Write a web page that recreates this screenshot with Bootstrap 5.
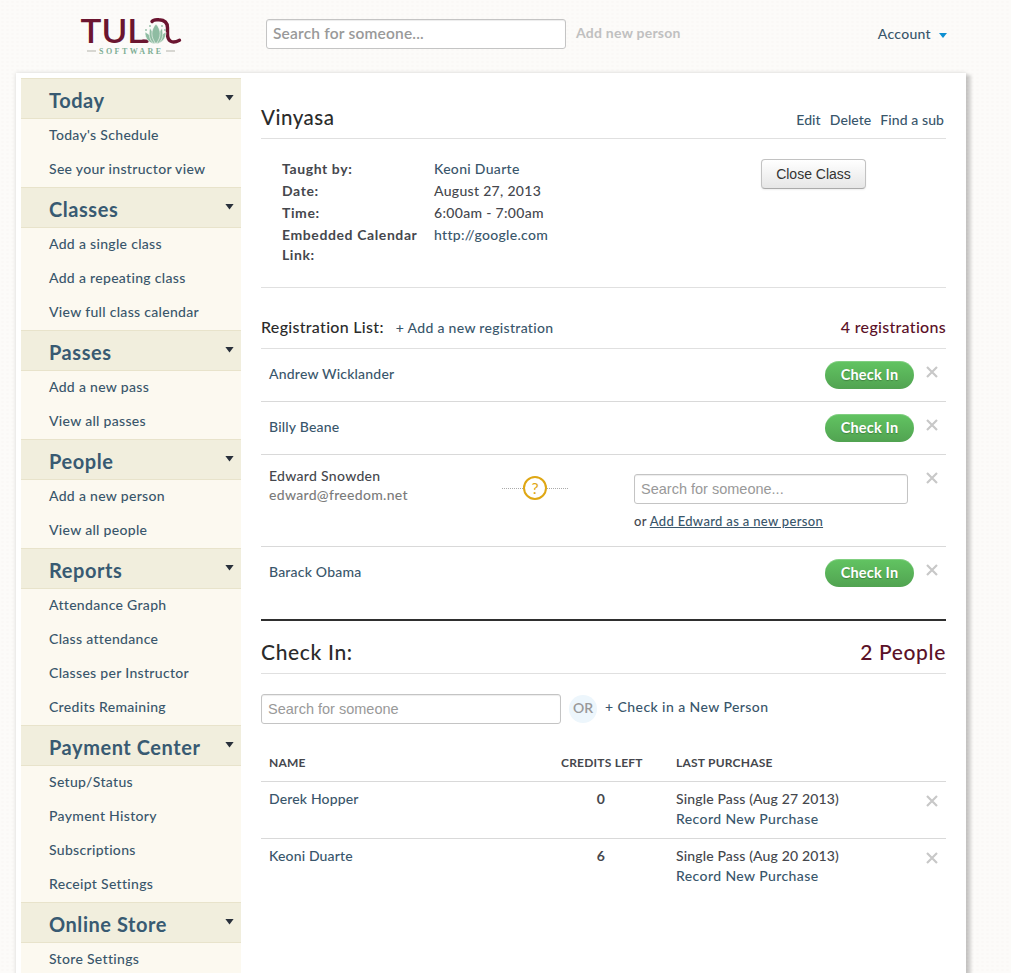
<!DOCTYPE html>
<html lang="en">
<head>
  <meta charset="UTF-8" />
  <meta name="viewport" content="width=device-width, initial-scale=1.0"/>
  <title>Tula Software - Vinyasa</title>
  <link href="https://cdn.jsdelivr.net/npm/bootstrap@5.3.2/dist/css/bootstrap.min.css" rel="stylesheet" />

  <style>
    body {
      font-family: Lato, sans-serif;
      font-size: 14px;
      font-weight: 500;
      line-height: 20px;
      letter-spacing: .31px;
      color: #45474d;
      height: 973px;
      overflow: hidden;
      background-color: #fcfbf9;
      background-image: radial-gradient(#faf8f6 1px, transparent 1.5px);
      background-size: 5px 4px;
    }
    a {
      color: #39566b;
      text-decoration: none;
    }

    /* top bar */
    .top-bar {
      height: 73px;
      padding: 0 64px 5px 79px;
    }
    .brand-logo {
      width: 104px;
      height: 48px;
      margin-right: 83px;
      overflow: visible;
    }
    .search-box {
      height: 30px;
      padding: 0 6px;
      border: 1px solid #c4c4c4;
      border-radius: 3px;
      box-shadow: inset 0 1px 1px rgba(0, 0, 0, .075);
      font-family: "Liberation Sans", sans-serif;
      font-size: 14.5px;
      letter-spacing: 0;
    }
    .search-box::placeholder {
      color: #999;
      opacity: 1;
    }
    .search-top {
      width: 300px;
      font-family: Lato, sans-serif;
      font-size: 15.5px;
      font-weight: 600;
      letter-spacing: .2px;
      padding-bottom: 2px;
    }
    .add-person {
      color: #c0c0c0;
      font-weight: 700;
      letter-spacing: .25px;
      margin-left: 10px;
      margin-top: -2px;
    }
    .account-caret {
      width: 8px;
      height: 5px;
      margin-top: 3px;
      background: #0d8fd1;
      clip-path: polygon(0 0, 100% 0, 50% 100%);
    }

    /* white sheet */
    .sheet {
      width: 950px;
      height: 905px;
      margin-left: 16px;
      padding: 5px 20px 0 5px;
      background: #fff;
      box-shadow: 5px 2px 3px rgba(0, 0, 0, .17), 0 0 4px rgba(0, 0, 0, .15);
    }

    /* sidebar */
    .side-menu {
      width: 220px;
      background: #fcf9f0;
    }
    .side-head {
      height: 41px;
      padding: 3px 7px 0 28px;
      border-top: 1px solid #e8e3cb;
      border-bottom: 1px solid #e8e3cb;
      background: #f1eedd;
      color: #385a72;
      font-size: 20px;
      font-weight: 700;
      letter-spacing: .55px;
    }
    .side-head::after {
      content: "";
      width: 9px;
      height: 6px;
      margin-bottom: 5px;
      background: #29303b;
      clip-path: polygon(0 0, 100% 0, 50% 100%);
    }
    .side-link {
      display: block;
      height: 34px;
      padding: 6px 0 0 28px;
    }

    /* class page */
    .page-title {
      height: 61px;
      padding: 27px 2px 0 0;
      border-bottom: 1px solid #e0e0e0;
    }
    .page-title h1 {
      font-size: 20.5px;
      font-weight: 500;
      line-height: 24px;
      color: #2b2b2b;
      letter-spacing: .5px;
    }
    .title-links {
      gap: 9px;
      padding-top: 5px;
      letter-spacing: .08px;
    }
    .class-info {
      height: 149px;
      padding: 20px 80px 0 21px;
      border-bottom: 1px solid #e0e0e0;
    }
    .class-info dl {
      grid-template-columns: 152px auto;
      row-gap: 2px;
    }
    .class-info dt {
      font-weight: 700;
      letter-spacing: .6px;
      padding-right: 12px;
    }
    .btn-close-class {
      width: 105px;
      height: 30px;
      padding: 0;
      border: 1px solid #c2c2c2;
      border-bottom-color: #aaa;
      border-radius: 4px;
      background: linear-gradient(#fff, #e6e6e6);
      box-shadow: 0 1px 2px rgba(0, 0, 0, .07);
      font-family: "Liberation Sans", sans-serif;
      font-size: 14px;
      letter-spacing: 0;
      color: #333;
    }
    .reg-head {
      height: 61px;
      padding-top: 29px;
      border-bottom: 1px solid #e0e0e0;
    }
    .reg-head h2 {
      font-size: 16px;
      font-weight: 500;
      line-height: 20px;
      letter-spacing: .3px;
      color: #2b2b2b;
    }
    .reg-head a {
      margin-left: 12px;
      padding-top: 1px;
    }
    .reg-head .wine,
    .checkin-head .wine {
      color: #5b1128;
    }
    .reg-row {
      height: 53px;
      padding: 12px 8px 0;
      border-bottom: 1px solid #d9d9d9;
    }
    .reg-row > a {
      padding-top: 3px;
      letter-spacing: .2px;
    }
    .reg-row-last {
      height: 72px;
      border-bottom: 0;
    }
    .reg-unknown {
      height: 92px;
    }
    .unknown-person {
      width: 233px;
      margin-top: -1px;
      line-height: 19px;
    }
    .btn-checkin {
      width: 89px;
      height: 28px;
      margin-right: 12px;
      padding: 0 0 1px;
      border: 0;
      border-radius: 14px;
      background: linear-gradient(#62c462, #51a351);
      box-shadow: inset 0 1px 0 rgba(255, 255, 255, .2);
      color: #fff;
      font-size: 14.5px;
      font-weight: 700;
      line-height: 27px;
      letter-spacing: .2px;
      text-shadow: 0 1px 1px rgba(0, 0, 0, .25);
    }
    .x-icon {
      display: block;
      width: 12px;
      height: 12px;
      margin-top: 5px;
      stroke: #c8c8c8;
      stroke-width: 2.2;
    }
    .muted-mail {
      color: #7b7b7b;
    }
    .dotted-line {
      width: 21px;
      border-top: 1px dotted #aaa;
    }
    .unknown-match {
      width: 66px;
      margin-top: 9px;
    }
    .person-match {
      width: 274px;
      margin-right: 18px;
      padding-top: 7px;
    }
    .small-note {
      font-size: 13px;
      letter-spacing: .33px;
      margin-top: 7px;
    }

    /* check in */
    .checkin-head {
      height: 55px;
      padding-top: 19px;
      border-top: 2px solid #2f2f2f;
      border-bottom: 1px solid #e0e0e0;
    }
    .checkin-head h2 {
      font-size: 21px;
      font-weight: 500;
      line-height: 24px;
      letter-spacing: .65px;
      color: #2b2b2b;
    }
    .checkin-tools {
      padding-top: 20px;
    }
    .checkin-tools a {
      padding-bottom: 4px;
      letter-spacing: .43px;
    }
    .or-dot {
      width: 28px;
      height: 28px;
      margin: 0 8px;
      background: #edf6fc;
      color: #999;
      font-weight: 600;
      line-height: 26px;
      letter-spacing: 0;
    }
    .people-table {
      --bs-table-bg: transparent;
      --bs-table-color: #45474d;
      table-layout: fixed;
      color: #45474d;
    }
    .people-table th {
      height: 57px;
      padding: 29px 8px 0;
      font-size: 12px;
      font-weight: 700;
      line-height: 19px;
      letter-spacing: .22px;
      vertical-align: top;
      border-bottom: 1px solid #d9d9d9;
    }
    .people-table td {
      height: 57px;
      padding: 7px 8px 0;
      letter-spacing: .15px;
      border-bottom: 1px solid #d9d9d9;
    }
    .people-table td:nth-child(3) a {
      letter-spacing: .4px;
    }
    .people-table td .x-icon {
      margin-top: 6px;
    }
    .people-table td.credit-count {
      padding-right: 27px;
      font-weight: 700;
      text-align: center;
    }
    .people-table tr:last-child td {
      border-bottom: 0;
    }
  </style>
</head>
<body>

<header class="top-bar d-flex align-items-center">
  <svg class="brand-logo" viewBox="0 0 104 48">
    <text x="1.5" y="33" font-family="Lato" font-size="33" font-weight="600" letter-spacing="0" textLength="65" lengthAdjust="spacingAndGlyphs" fill="#6b1530">TUL</text>
    <g fill="none" stroke="#6b1530" stroke-width="3.4" stroke-linecap="round">
      <path d="M73 11.500c1-1.500 4-2 7-1.700c6 .3 8.500 3.200 8.500 8v6c0 7 4 10.500 12 6.500"/>
      <path d="M64 31.300h4"/>
    </g>
    <g fill="#8fbca2" stroke="#fcfbf9" stroke-width=".6">
      <path d="M66 22c0 7 4 11 10 12c-1-5-4-9-10-12zM87 22c0 7-4 11-10 12c1-5 4-9 10-12z"/>
      <path d="M71 18c-2 7 0 14 5 16c0-6-1-11-5-16zM83 18c2 7 0 14-5 16c0-6 1-11 5-16z"/>
      <path d="M77 14c-5.500 6-5.500 13 0 20c5.500-7 5.500-14 0-20z"/>
    </g>
    <g fill="#8fbca2">
      <circle cx="71" cy="16" r=".9"/><circle cx="83" cy="16" r=".9"/>
      <circle cx="67" cy="20" r=".9"/><circle cx="86" cy="20" r=".9"/>
    </g>
    <path d="M8 41h9M87 41h9" stroke="#b3b3ab" stroke-width="1"/>
    <text x="20" y="44" font-family="Liberation Serif" font-size="8" font-weight="700" textLength="64" letter-spacing="2" fill="#7fae95">SOFTWARE</text>
  </svg>
  <input class="search-box search-top" type="text" placeholder="Search for someone...">
  <a class="add-person" href="#">Add new person</a>
  <a class="d-flex align-items-center gap-2 ms-auto" href="#">Account <span class="account-caret"></span></a>
</header>

<div class="sheet d-flex align-items-start">
  <nav class="side-menu flex-shrink-0">
    <div class="side-head d-flex align-items-center justify-content-between">Today</div>
    <a class="side-link" href="#">Today's Schedule</a>
    <a class="side-link" href="#">See your instructor view</a>
    <div class="side-head d-flex align-items-center justify-content-between">Classes</div>
    <a class="side-link" href="#">Add a single class</a>
    <a class="side-link" href="#">Add a repeating class</a>
    <a class="side-link" href="#">View full class calendar</a>
    <div class="side-head d-flex align-items-center justify-content-between">Passes</div>
    <a class="side-link" href="#">Add a new pass</a>
    <a class="side-link" href="#">View all passes</a>
    <div class="side-head d-flex align-items-center justify-content-between">People</div>
    <a class="side-link" href="#">Add a new person</a>
    <a class="side-link" href="#">View all people</a>
    <div class="side-head d-flex align-items-center justify-content-between">Reports</div>
    <a class="side-link" href="#">Attendance Graph</a>
    <a class="side-link" href="#">Class attendance</a>
    <a class="side-link" href="#">Classes per Instructor</a>
    <a class="side-link" href="#">Credits Remaining</a>
    <div class="side-head d-flex align-items-center justify-content-between">Payment Center</div>
    <a class="side-link" href="#">Setup/Status</a>
    <a class="side-link" href="#">Payment History</a>
    <a class="side-link" href="#">Subscriptions</a>
    <a class="side-link" href="#">Receipt Settings</a>
    <div class="side-head d-flex align-items-center justify-content-between">Online Store</div>
    <a class="side-link" href="#">Store Settings</a>
  </nav>

  <main class="flex-grow-1 ms-3 ps-1">
    <div class="page-title d-flex justify-content-between">
      <h1 class="m-0">Vinyasa</h1>
      <div class="title-links d-flex">
        <a href="#">Edit</a>
        <a href="#">Delete</a>
        <a href="#">Find a sub</a>
      </div>
    </div>

    <div class="class-info d-flex justify-content-between align-items-start">
      <dl class="d-grid m-0">
        <dt>Taught by:</dt><dd class="m-0"><a href="#">Keoni Duarte</a></dd>
        <dt>Date:</dt><dd class="m-0">August 27, 2013</dd>
        <dt>Time:</dt><dd class="m-0">6:00am - 7:00am</dd>
        <dt>Embedded Calendar Link:</dt><dd class="m-0"><a href="#">http://google.com</a></dd>
      </dl>
      <button class="btn btn-close-class">Close Class</button>
    </div>

    <div class="reg-head d-flex">
      <h2 class="m-0">Registration List:</h2>
      <a href="#">+ Add a new registration</a>
      <h2 class="m-0 ms-auto wine">4 registrations</h2>
    </div>

    <div class="reg-row d-flex align-items-start">
      <a class="me-auto" href="#">Andrew Wicklander</a>
      <button class="btn btn-checkin">Check In</button>
      <svg class="x-icon" viewBox="0 0 12 12"><path d="M1 1l10 10M11 1L1 11"/></svg>
    </div>
    <div class="reg-row d-flex align-items-start">
      <a class="me-auto" href="#">Billy Beane</a>
      <button class="btn btn-checkin">Check In</button>
      <svg class="x-icon" viewBox="0 0 12 12"><path d="M1 1l10 10M11 1L1 11"/></svg>
    </div>
    <div class="reg-row reg-unknown d-flex align-items-start">
      <div class="unknown-person">Edward Snowden<br><span class="muted-mail">edward@freedom.net</span></div>
      <div class="unknown-match d-flex align-items-center">
        <span class="dotted-line"></span>
        <svg width="24" height="24" viewBox="0 0 24 24">
          <circle cx="12" cy="12" r="11" fill="#fff" stroke="#dfa714" stroke-width="2"/>
          <text x="12" y="17.500" text-anchor="middle" font-family="Lato" font-size="16" font-weight="400" letter-spacing="0" fill="#dfa714">?</text>
        </svg>
        <span class="dotted-line"></span>
      </div>
      <div class="person-match ms-auto">
        <input class="search-box w-100 d-block" type="text" placeholder="Search for someone...">
        <div class="small-note">or <a class="text-decoration-underline" href="#">Add Edward as a new person</a></div>
      </div>
      <svg class="x-icon" viewBox="0 0 12 12"><path d="M1 1l10 10M11 1L1 11"/></svg>
    </div>
    <div class="reg-row reg-row-last d-flex align-items-start">
      <a class="me-auto" href="#">Barack Obama</a>
      <button class="btn btn-checkin">Check In</button>
      <svg class="x-icon" viewBox="0 0 12 12"><path d="M1 1l10 10M11 1L1 11"/></svg>
    </div>

    <div class="checkin-head d-flex justify-content-between">
      <h2 class="m-0">Check In:</h2>
      <h2 class="m-0 wine">2 People</h2>
    </div>
    <div class="checkin-tools d-flex align-items-center">
      <input class="search-box" style="width: 300px" type="text" placeholder="Search for someone">
      <span class="or-dot rounded-circle text-center">OR</span>
      <a href="#">+ Check in a New Person</a>
    </div>

    <table class="people-table table m-0">
      <colgroup><col style="width: 292px"><col style="width: 115px"><col><col style="width: 28px"></colgroup>
      <thead>
        <tr><th>NAME</th><th>CREDITS LEFT</th><th>LAST PURCHASE</th><th></th></tr>
      </thead>
      <tbody>
        <tr>
          <td><a href="#">Derek Hopper</a></td>
          <td class="credit-count">0</td>
          <td>Single Pass (Aug 27 2013)<br><a href="#">Record New Purchase</a></td>
          <td><svg class="x-icon" viewBox="0 0 12 12"><path d="M1 1l10 10M11 1L1 11"/></svg></td>
        </tr>
        <tr>
          <td><a href="#">Keoni Duarte</a></td>
          <td class="credit-count">6</td>
          <td>Single Pass (Aug 20 2013)<br><a href="#">Record New Purchase</a></td>
          <td><svg class="x-icon" viewBox="0 0 12 12"><path d="M1 1l10 10M11 1L1 11"/></svg></td>
        </tr>
      </tbody>
    </table>
  </main>
</div>

<script src="https://cdn.jsdelivr.net/npm/bootstrap@5.3.2/dist/js/bootstrap.bundle.min.js"></script>
</body>
</html>
